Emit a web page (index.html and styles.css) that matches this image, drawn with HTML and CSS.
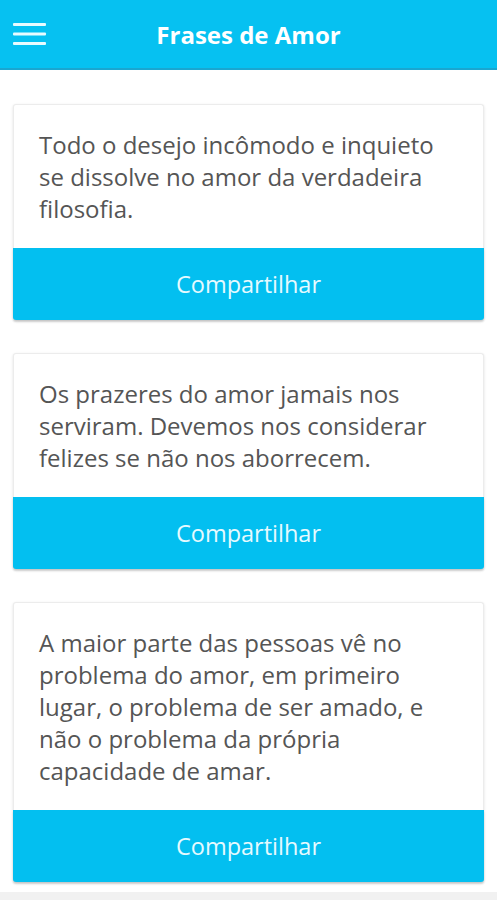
FILE: index.html
```html
<!DOCTYPE html>
<html>
  <head>
    <meta name="viewport" content="width=device-width, initial-scale=1">
    <link rel="stylesheet" href="styles.css">
  </head>
  <body>
    <div class="topbar">
      <span class="menu">
        <svg width="34" height="24" viewBox="0 0 34 24">
          <rect x="0" y="0" width="33" height="3" rx="1" fill="#e8fbff"/>
          <rect x="0" y="9.5" width="33" height="3" rx="1" fill="#e8fbff"/>
          <rect x="0" y="19" width="33" height="3" rx="1" fill="#e8fbff"/>
        </svg>
      </span>
      <h1 class="title">Frases de Amor</h1>
    </div>

    <div class="list">
      <div class="card">
        <p class="quote">Todo o desejo incômodo e inquieto se dissolve no amor da verdadeira filosofia.</p>
        <button class="share">Compartilhar</button>
      </div>
      <div class="card">
        <p class="quote">Os prazeres do amor jamais nos serviram. Devemos nos considerar felizes se não nos aborrecem.</p>
        <button class="share">Compartilhar</button>
      </div>
      <div class="card">
        <p class="quote">A maior parte das pessoas vê no problema do amor, em primeiro lugar, o problema de ser amado, e não o problema da própria capacidade de amar.</p>
        <button class="share">Compartilhar</button>
      </div>
    </div>
    <div class="bottom"></div>
  </body>
</html>
```

FILE: styles.css
```css
body {
  margin: 0;
  background: #fff;
  font-family: "Open Sans", "Noto Sans", sans-serif;
}

.topbar {
  height: 68px;
  background: #06c1f1;
  border-bottom: 2px solid #1aa6d0;
  display: flex;
  align-items: center;
  position: relative;
}
.menu {
  display: flex;
  padding-left: 13px;
  padding-top: 2px;
}
.title {
  position: absolute;
  left: 0;
  right: 0;
  margin: 0;
  text-align: center;
  color: #fff;
  font-size: 24px;
  font-weight: 700;
  pointer-events: none;
}

.list {
  padding: 34px 13px 10px 13px;
  display: flex;
  flex-direction: column;
  gap: 33px;
}
.card {
  background: #fff;
  border: 1px solid #ececec;
  border-bottom: none;
  border-radius: 3px;
  box-shadow: 0 1px 3px rgba(0,0,0,0.12);
  display: flex;
  flex-direction: column;
}
.quote {
  margin: 0;
  padding: 24px 32px 23px 25px;
  font-size: 24px;
  line-height: 32px;
  color: #555;
}
.share {
  height: 72px;
  border: none;
  border-radius: 0 0 3px 3px;
  background: #03bff0;
  color: #e6faff;
  font-family: inherit;
  font-size: 23.5px;
  margin: 0 -1px;
  box-shadow: 0 2px 2px rgba(0,0,0,0.15);
}

.bottom {
  height: 10px;
  background: #f1f1f1;
}
```
